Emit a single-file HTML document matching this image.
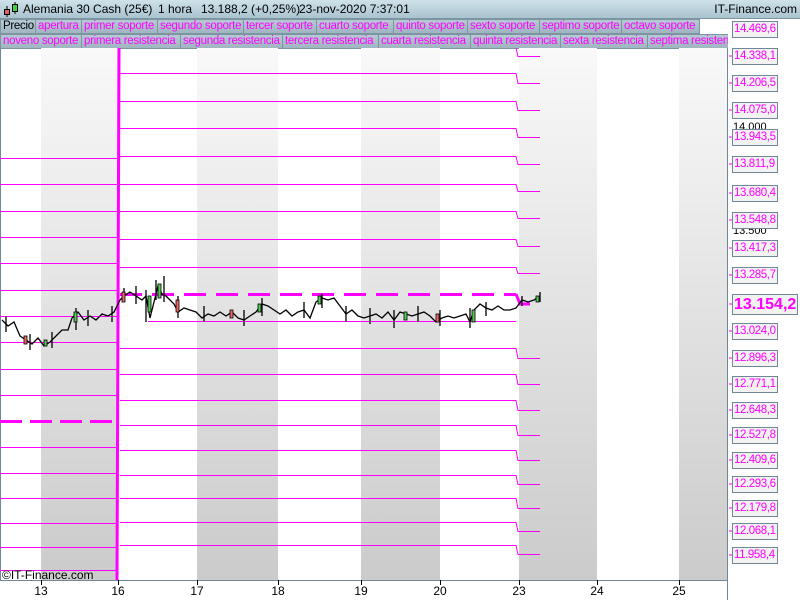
<!DOCTYPE html>
<html><head><meta charset="utf-8"><style>
body{margin:0;width:800px;height:600px;overflow:hidden;background:#fff;font-family:"Liberation Sans",sans-serif;position:relative}
#hdr{position:absolute;left:0;top:0;width:800px;height:18px;background:linear-gradient(#cfe2ea,#a9c3cf);border-bottom:1px solid #7d95a1}
#hdr span{position:absolute;top:2px;font-size:12px;color:#000;white-space:nowrap}
.row{position:absolute;left:0;height:15px;width:728px;overflow:hidden}
.row span{position:absolute;top:0;box-sizing:border-box;height:15px;line-height:13px;font-size:11.5px;color:#ff00ff;background:linear-gradient(#b6cad4,#9fb5c1);border:1px solid #7d95a1;padding:0 0 0 2px;white-space:nowrap;overflow:hidden;letter-spacing:-0.3px}
.lab{position:absolute;left:732px;box-sizing:border-box;width:46px;height:17px;border:1px solid #6f8796;background:#f2f2f2;color:#ff00ff;font-size:11.5px;line-height:15px;padding-left:1px;letter-spacing:-0.4px;white-space:nowrap;overflow:hidden}
.tk{position:absolute;left:733px;font-size:11px;color:#000}
.xl{position:absolute;top:584px;font-size:12px;color:#000;transform:translateX(-50%)}
</style></head><body>
<div id="hdr"><svg style="position:absolute;left:3px;top:2px" width="16" height="15"><line x1="4" y1="4" x2="4" y2="15" stroke="#000"/><rect x="1.5" y="7.5" width="5" height="5" fill="#e06060" stroke="#000"/><line x1="12" y1="0" x2="12" y2="12" stroke="#000"/><rect x="9.5" y="2.5" width="5" height="7" fill="#40d040" stroke="#000"/></svg>
<span style="left:23px">Alemania 30 Cash (25€)</span><span style="left:158px">1 hora</span><span style="left:201px">13.188,2 (+0,25%)</span><span style="left:299px">23-nov-2020 7:37:01</span><span style="right:3px">IT-Finance.com</span></div>
<div class="row" style="top:19px"><span style="left:0;width:36px;color:#000">Precio</span><span style="left:35px;width:47px">apertura</span><span style="left:81px;width:77px">primer soporte</span><span style="left:157px;width:87px">segundo soporte</span><span style="left:243px;width:74px">tercer soporte</span><span style="left:316px;width:78px">cuarto soporte</span><span style="left:393px;width:75px">quinto soporte</span><span style="left:467px;width:73px">sexto soporte</span><span style="left:539px;width:83px">septimo soporte</span><span style="left:621px;width:79px">octavo soporte</span></div>
<div class="row" style="top:34px"><span style="left:0;width:82px">noveno soporte</span><span style="left:81px;width:100px">primera resistencia</span><span style="left:180px;width:103px">segunda resistencia</span><span style="left:282px;width:97px">tercera resistencia</span><span style="left:378px;width:93px">cuarta resistencia</span><span style="left:470px;width:91px">quinta resistencia</span><span style="left:560px;width:88px">sexta resistencia</span><span style="left:647px;width:90px">septima resistencia</span></div>
<svg style="position:absolute;left:0;top:48px" width="800" height="552">
<defs><linearGradient id="g" x1="0" y1="0" x2="0" y2="1"><stop offset="0" stop-color="#f9f9f9"/><stop offset="1" stop-color="#cbcbcb"/></linearGradient></defs>
<g transform="translate(0,-48)">
<rect x="41" y="48" width="77" height="532" fill="url(#g)"/>
<rect x="197" y="48" width="81" height="532" fill="url(#g)"/>
<rect x="361" y="48" width="79" height="532" fill="url(#g)"/>
<rect x="519" y="48" width="78" height="532" fill="url(#g)"/>
<rect x="679" y="48" width="48" height="532" fill="url(#g)"/>
<line x1="0.5" y1="48" x2="0.5" y2="580" stroke="#6f8796"/>
<line x1="727.5" y1="48" x2="727.5" y2="600" stroke="#6f8796"/>
<line x1="0" y1="580.5" x2="727" y2="580.5" stroke="#6f8796"/>
<g stroke="#ff00ff" stroke-width="1" fill="none">
<path d="M0 158.5H118M0 184.5H118M0 211.5H118M0 237.5H118M0 263.5H118M0 290.5H118M0 316.5H118M0 342.5H118M0 369.5H118M0 395.5H118M0 447.5H118M0 473.5H118M0 498.5H118M0 523.5H118M0 547.5H118M0 570.5H118"/>
<path d="M120 73.5H516L518 83.5H540M120 101.5H516L518 110.5H540M120 128.5H516L518 137.5H540M120 156.5H516L518 164.5H540M120 184.5H516L518 191.5H540M120 211.5H516L518 218.5H540M120 239.5H516L518 246.5H540M120 267.5H516L518 273.5H540M516 48L518 56.5H540"/>
<path d="M120 348.5H516L518 358.5H540M120 374.5H516L518 384.5H540M120 400.5H516L518 410.5H540M120 425.5H516L518 435.5H540M120 450.5H516L518 460.5H540M120 475.5H516L518 484.5H540M120 498.5H516L518 508.5H540M120 522.5H516L518 531.5H540M120 545.5H516L518 554.5H540"/>
<path d="M148 321.5H516"/>
<path d="M733 29H729M733 56H729M733 83H729M733 110H729M733 137H729M733 164H729M733 193H729M733 220H729M733 248H729M733 275H729M733 304H729M733 331H729M733 358H729M733 384H729M733 410H729M733 435H729M733 460H729M733 484H729M733 508H729M733 531H729M733 555H729"/>
</g>
<path d="M0 421.5H118" stroke="#ff00ff" stroke-width="3" stroke-dasharray="22 8"/>
<path d="M120 294.5H516" stroke="#ff00ff" stroke-width="3" stroke-dasharray="22 10"/>
<path d="M516 294L520 304H530" stroke="#ff00ff" stroke-width="3" fill="none"/>
<path d="M119 48L117 580" stroke="#ff00ff" stroke-width="3"/>
<g stroke="#000" stroke-width="1.3" fill="none">
<polyline points="2,320 8,326 14,322 20,336 26,340 32,344 38,338 44,346 50,342 56,336 62,330 68,330 72,318 78,312 84,320 90,316 96,320 102,314 108,316 114,312 120,300 124,296 130,292 136,296 142,300 146,296 150,318 154,302 158,286 162,294 166,296 170,300 174,304 178,312 184,308 190,310 196,312 202,318 208,314 214,316 220,312 226,316 232,312 238,318 244,320 250,316 256,312 262,304 268,306 274,310 280,314 286,310 292,316 298,312 304,310 310,318 316,302 322,298 328,300 334,298 340,306 346,314 352,310 358,316 364,318 370,316 376,314 382,318 388,312 394,320 400,312 406,314 412,316 418,314 424,312 430,316 436,322 442,318 448,316 454,318 460,316 466,314 470,322 474,310 480,304 486,308 492,310 498,306 504,310 510,310 516,308 522,300 528,302 534,300 540,296"/>
<path d="M6 316V332M30 334V350M52 332V348M76 308V330M88 310V326M112 306V322M124 288V302M136 286V304M146 290V322M156 280V300M164 276V302M178 296V318M204 306V322M244 310V326M262 298V316M304 302V318M322 294V308M346 306V322M370 308V324M394 310V328M418 306V322M440 310V326M470 308V328M486 302V316M522 296V306M540 292V302"/>
</g>
<g stroke="#000" stroke-width="0.8">
<rect x="74" y="312" width="3" height="10" fill="#5c5"/><rect x="122" y="292" width="3" height="10" fill="#e66"/><rect x="148" y="296" width="3" height="16" fill="#5c5"/><rect x="158" y="284" width="3" height="14" fill="#5c5"/><rect x="176" y="300" width="3" height="12" fill="#e66"/><rect x="230" y="310" width="3" height="8" fill="#e66"/><rect x="258" y="304" width="3" height="8" fill="#5c5"/><rect x="318" y="296" width="3" height="8" fill="#5c5"/><rect x="404" y="312" width="3" height="8" fill="#5c5"/><rect x="436" y="314" width="3" height="8" fill="#e66"/><rect x="472" y="310" width="3" height="12" fill="#5c5"/><rect x="536" y="296" width="3" height="6" fill="#5c5"/><rect x="24" y="336" width="3" height="8" fill="#e66"/><rect x="44" y="340" width="3" height="6" fill="#5c5"/>
</g>
<g stroke="#000"><path d="M41.5 580V585M118.5 580V585M197.5 580V585M278.5 580V585M361.5 580V585M440.5 580V585M519.5 580V585M597.5 580V585M679.5 580V585"/></g>
</g>
</svg>
<div class="tk" style="top:121px">14.000</div><div class="tk" style="top:225px">13.500</div>
<div class="lab" style="top:21px">14.469,6</div><div class="lab" style="top:48px">14.338,1</div><div class="lab" style="top:75px">14.206,5</div><div class="lab" style="top:102px">14.075,0</div><div class="lab" style="top:129px">13.943,5</div><div class="lab" style="top:156px">13.811,9</div><div class="lab" style="top:185px">13.680,4</div><div class="lab" style="top:212px">13.548,8</div><div class="lab" style="top:240px">13.417,3</div><div class="lab" style="top:267px">13.285,7</div>
<div class="lab" style="top:294px;width:66px;height:21px;line-height:19px;font-size:16px;font-weight:bold;letter-spacing:0">13.154,2</div>
<div class="lab" style="top:323px">13.024,0</div><div class="lab" style="top:350px">12.896,3</div><div class="lab" style="top:376px">12.771,1</div><div class="lab" style="top:402px">12.648,3</div><div class="lab" style="top:427px">12.527,8</div><div class="lab" style="top:452px">12.409,6</div><div class="lab" style="top:476px">12.293,6</div><div class="lab" style="top:500px">12.179,8</div><div class="lab" style="top:523px">12.068,1</div><div class="lab" style="top:547px">11.958,4</div>
<div style="position:absolute;left:2px;top:568px;font-size:12px;color:#000">©IT-Finance.com</div>
<div class="xl" style="left:41px">13</div><div class="xl" style="left:118px">16</div><div class="xl" style="left:197px">17</div><div class="xl" style="left:278px">18</div><div class="xl" style="left:361px">19</div><div class="xl" style="left:440px">20</div><div class="xl" style="left:519px">23</div><div class="xl" style="left:597px">24</div><div class="xl" style="left:679px">25</div>
</body></html>
